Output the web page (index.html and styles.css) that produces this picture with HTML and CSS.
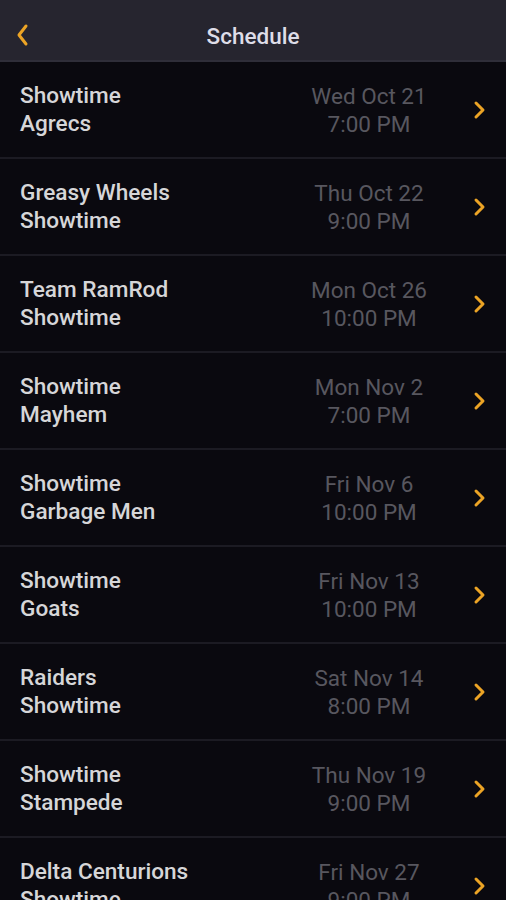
FILE: index.html
```html
<!DOCTYPE html>
<html lang="en">
<head>
    <meta charset="UTF-8">
    <meta name="viewport" content="width=device-width, initial-scale=1.0">
    <title>Schedule</title>
    <link rel="stylesheet" href="styles.css">
</head>
<body>

    <!-- Top bar -->
    <div class="topbar">
        <a href="#" class="back">
            <svg width="14" height="24" viewBox="0 0 14 24"><path d="M11 3 L4 12 L11 21" fill="none" stroke="#eca425" stroke-width="3" stroke-linecap="round" stroke-linejoin="round"/></svg>
        </a>
        <h1>Schedule</h1>
    </div>

    <!-- Games -->
    <div class="games" id="games"></div>

    <script>
        const games = [
            ['Showtime', 'Agrecs', 'Wed Oct 21', '7:00 PM'],
            ['Greasy Wheels', 'Showtime', 'Thu Oct 22', '9:00 PM'],
            ['Team RamRod', 'Showtime', 'Mon Oct 26', '10:00 PM'],
            ['Showtime', 'Mayhem', 'Mon Nov 2', '7:00 PM'],
            ['Showtime', 'Garbage Men', 'Fri Nov 6', '10:00 PM'],
            ['Showtime', 'Goats', 'Fri Nov 13', '10:00 PM'],
            ['Raiders', 'Showtime', 'Sat Nov 14', '8:00 PM'],
            ['Showtime', 'Stampede', 'Thu Nov 19', '9:00 PM'],
            ['Delta Centurions', 'Showtime', 'Fri Nov 27', '9:00 PM']
        ];

        const list = document.getElementById('games');
        list.innerHTML = games.map(g => `
            <a href="#" class="game">
                <div class="teams">
                    <span>${g[0]}</span>
                    <span>${g[1]}</span>
                </div>
                <div class="when">
                    <span>${g[2]}</span>
                    <span>${g[3]}</span>
                </div>
                <svg class="arrow" width="13" height="20" viewBox="0 0 13 20"><path d="M3 3 L10 10 L3 17" fill="none" stroke="#eca425" stroke-width="3" stroke-linecap="round" stroke-linejoin="round"/></svg>
            </a>
        `).join('');
    </script>

</body>
</html>
```

FILE: styles.css
```css
body {
    margin: 0;
    padding: 0;
    background-color: #0a090f;
    font-family: Roboto, "Liberation Sans", sans-serif;
}

/* Top bar */
.topbar {
    position: relative;
    height: 48px;
    padding-top: 12px;
    background-color: #26252f;
    border-bottom: 2px solid #2f2e39;
    display: flex;
    align-items: center;
    justify-content: center;
}

.topbar h1 {
    margin: 0;
    font-size: 22.5px;
    font-weight: 500;
    color: #dedde8;
}

.back {
    position: absolute;
    left: 15px;
    top: 23px;
    display: block;
    line-height: 0;
}

/* Game rows */
.game {
    display: flex;
    align-items: center;
    height: 95px;
    padding: 0 20px;
    border-bottom: 2px solid #1c1b23;
    text-decoration: none;
}

.teams {
    flex: 1;
    display: flex;
    flex-direction: column;
    font-size: 22.6px;
    font-weight: 500;
    line-height: 28px;
    color: #d6d6d8;
}

.when {
    width: 140px;
    display: flex;
    flex-direction: column;
    text-align: center;
    font-size: 22.5px;
    line-height: 28px;
    color: #58575f;
}

.arrow {
    margin-left: 34px;
    margin-top: 1px;
}
```
